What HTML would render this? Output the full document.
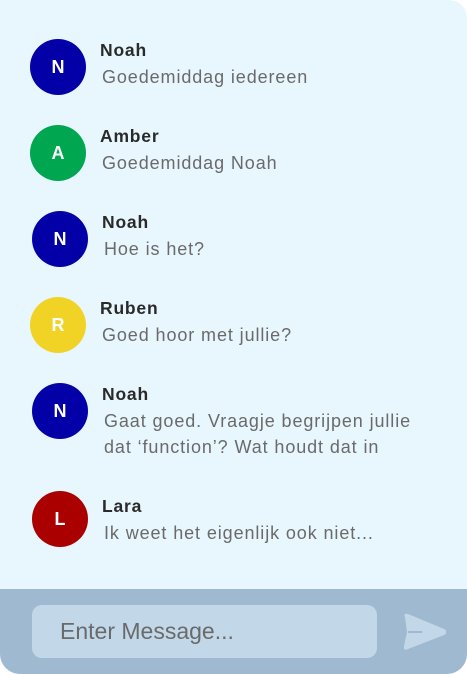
<!DOCTYPE html><html><head><style>
body{margin:0;width:467px;height:674px;background:#fff;font-family:"Liberation Sans",sans-serif;overflow:hidden}
.w{position:absolute;left:0;top:0;width:467px;height:674px;background:#e8f7fe;border-radius:0 18px 20px 20px;overflow:hidden}
.a{position:absolute;width:56px;height:56px;border-radius:50%;color:#fff;font-weight:bold;font-size:18px;text-align:center;line-height:56px}
.n{position:absolute;font-weight:bold;font-size:17.5px;color:#2a2a2a;letter-spacing:.8px}
.m{position:absolute;font-size:18px;color:#6a6a6a;line-height:26px;letter-spacing:.9px}
.f{position:absolute;left:0;top:589px;width:467px;height:85px;background:#9fb9d1}
.i{position:absolute;left:32px;top:16px;width:345px;height:53px;background:#c2d8e9;border-radius:10px;font-size:23px;color:#6a6a6a;line-height:53px;text-indent:28px}
</style></head><body><div class="w">
<div class="a" style="left:30px;top:39px;background:#0400a8">N</div><div class="n" style="left:100px;top:40px">Noah</div><div class="m" style="left:102px;top:64px">Goedemiddag iedereen</div>
<div class="a" style="left:30px;top:125px;background:#00a650">A</div><div class="n" style="left:100px;top:126px">Amber</div><div class="m" style="left:102px;top:150px">Goedemiddag Noah</div>
<div class="a" style="left:32px;top:211px;background:#0400a8">N</div><div class="n" style="left:102px;top:212px">Noah</div><div class="m" style="left:104px;top:236px">Hoe is het?</div>
<div class="a" style="left:30px;top:297px;background:#f0d325">R</div><div class="n" style="left:100px;top:298px">Ruben</div><div class="m" style="left:102px;top:322px">Goed hoor met jullie?</div>
<div class="a" style="left:32px;top:383px;background:#0400a8">N</div><div class="n" style="left:102px;top:384px">Noah</div><div class="m" style="left:104px;top:408px">Gaat goed. Vraagje begrijpen jullie<br>dat ‘function’? Wat houdt dat in</div>
<div class="a" style="left:32px;top:491px;background:#aa0000">L</div><div class="n" style="left:102px;top:496px">Lara</div><div class="m" style="left:104px;top:520px">Ik weet het eigenlijk ook niet...</div>
<div class="f"><div class="i">Enter Message...</div>
<svg style="position:absolute;left:402px;top:24px" width="44" height="38" viewBox="0 0 44 38"><path d="M4 4 Q2 1 6 2 L42 17 Q45 19 42 21 L6 35 Q2 37 3 33 L6 19 Z" fill="#c2d8e9" stroke="#c2d8e9" stroke-width="2" stroke-linejoin="round"/><path d="M6 19 H20" stroke="#9fb9d1" stroke-width="2"/></svg>
</div></div></body></html>
